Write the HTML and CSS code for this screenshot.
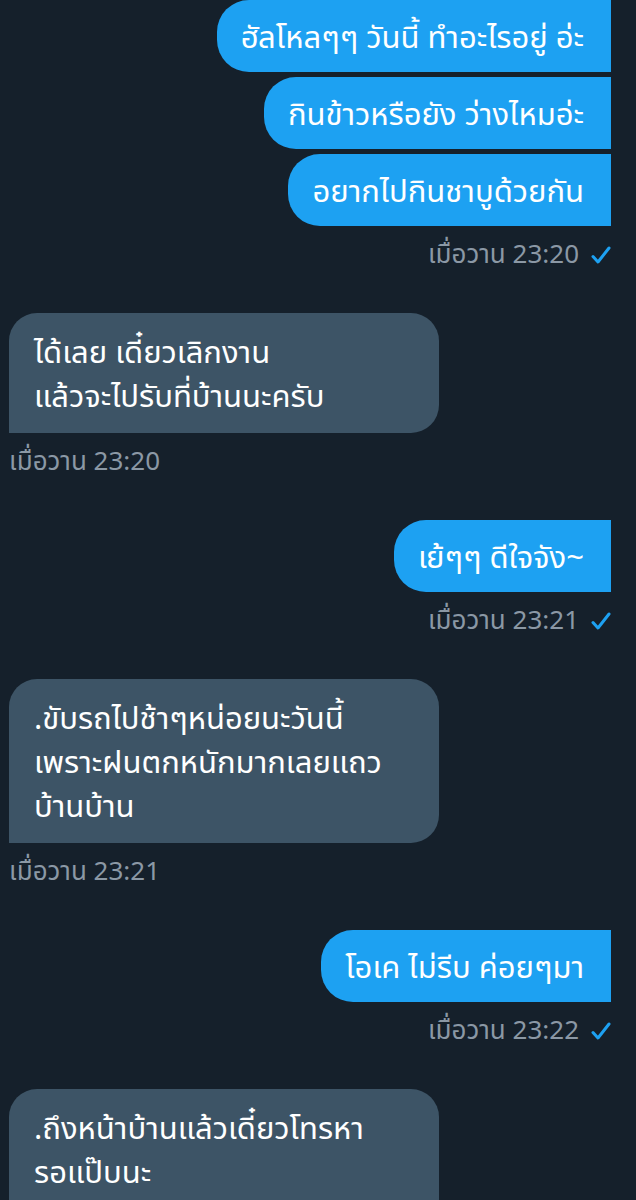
FILE: index.html
```html
<!DOCTYPE html>
<html>
<head>
    <meta charset="utf-8">
    <title>Messages</title>
    <link rel="stylesheet" href="styles.css">
</head>
<body>

    <div id="thread">

        <div class="group mine">
            <div class="bubble">ฮัลโหลๆๆ วันนี้ ทำอะไรอยู่ อ่ะ</div>
            <div class="bubble">กินข้าวหรือยัง ว่างไหมอ่ะ</div>
            <div class="bubble">อยากไปกินชาบูด้วยกัน</div>
            <div class="stamp">เมื่อวาน 23:20
                <svg class="tick" width="20" height="18" viewBox="0 0 20 18"><path d="M2 10.5 L7 16 L18 2"/></svg>
            </div>
        </div>

        <div class="group theirs">
            <div class="bubble">ได้เลย เดี๋ยวเลิกงาน<br>แล้วจะไปรับที่บ้านนะครับ</div>
            <div class="stamp">เมื่อวาน 23:20</div>
        </div>

        <div class="group mine">
            <div class="bubble">เย้ๆๆ ดีใจจัง~</div>
            <div class="stamp">เมื่อวาน 23:21
                <svg class="tick" width="20" height="18" viewBox="0 0 20 18"><path d="M2 10.5 L7 16 L18 2"/></svg>
            </div>
        </div>

        <div class="group theirs">
            <div class="bubble">.ขับรถไปช้าๆหน่อยนะวันนี้<br>เพราะฝนตกหนักมากเลยแถว<br>บ้านบ้าน</div>
            <div class="stamp">เมื่อวาน 23:21</div>
        </div>

        <div class="group mine">
            <div class="bubble">โอเค ไม่รีบ ค่อยๆมา</div>
            <div class="stamp">เมื่อวาน 23:22
                <svg class="tick" width="20" height="18" viewBox="0 0 20 18"><path d="M2 10.5 L7 16 L18 2"/></svg>
            </div>
        </div>

        <div class="group theirs">
            <div class="bubble">.ถึงหน้าบ้านแล้วเดี๋ยวโทรหา<br>รอแป๊บนะ<br>&nbsp;</div>
        </div>

    </div>

</body>
</html>
```

FILE: styles.css
```css
body{
	margin: 0;
	background-color: #15202b;
	font-family: "Noto Sans", "Noto Sans Thai", "DejaVu Sans", sans-serif;
	color: #fff;
	overflow: hidden;
}

#thread{
	display: flex;
	flex-direction: column;
	padding: 0 25px 0 9px;
}

.group{
	display: flex;
	flex-direction: column;
	gap: 5px;
}

.mine{
	align-items: flex-end;
}

.theirs{
	align-items: flex-start;
}

.bubble{
	font-size: 31px;
	line-height: 44px;
	white-space: nowrap;
}

.mine .bubble{
	background-color: #1da1f2;
	border-radius: 32px 0 0 32px;
	padding: 14px 27px 14px 24px;
}

.theirs .bubble{
	background-color: #3d5466;
	border-radius: 28px 28px 28px 0;
	padding: 16px 25px;
	width: 380px;
}

.stamp{
	display: flex;
	align-items: center;
	gap: 12px;
	margin: 9px 0 43px;
	height: 30px;
	font-size: 26px;
	color: #8b98a5;
}

.tick{
	fill: none;
	stroke: #1da1f2;
	stroke-width: 3px;
	stroke-linecap: round;
	stroke-linejoin: round;
}
```
